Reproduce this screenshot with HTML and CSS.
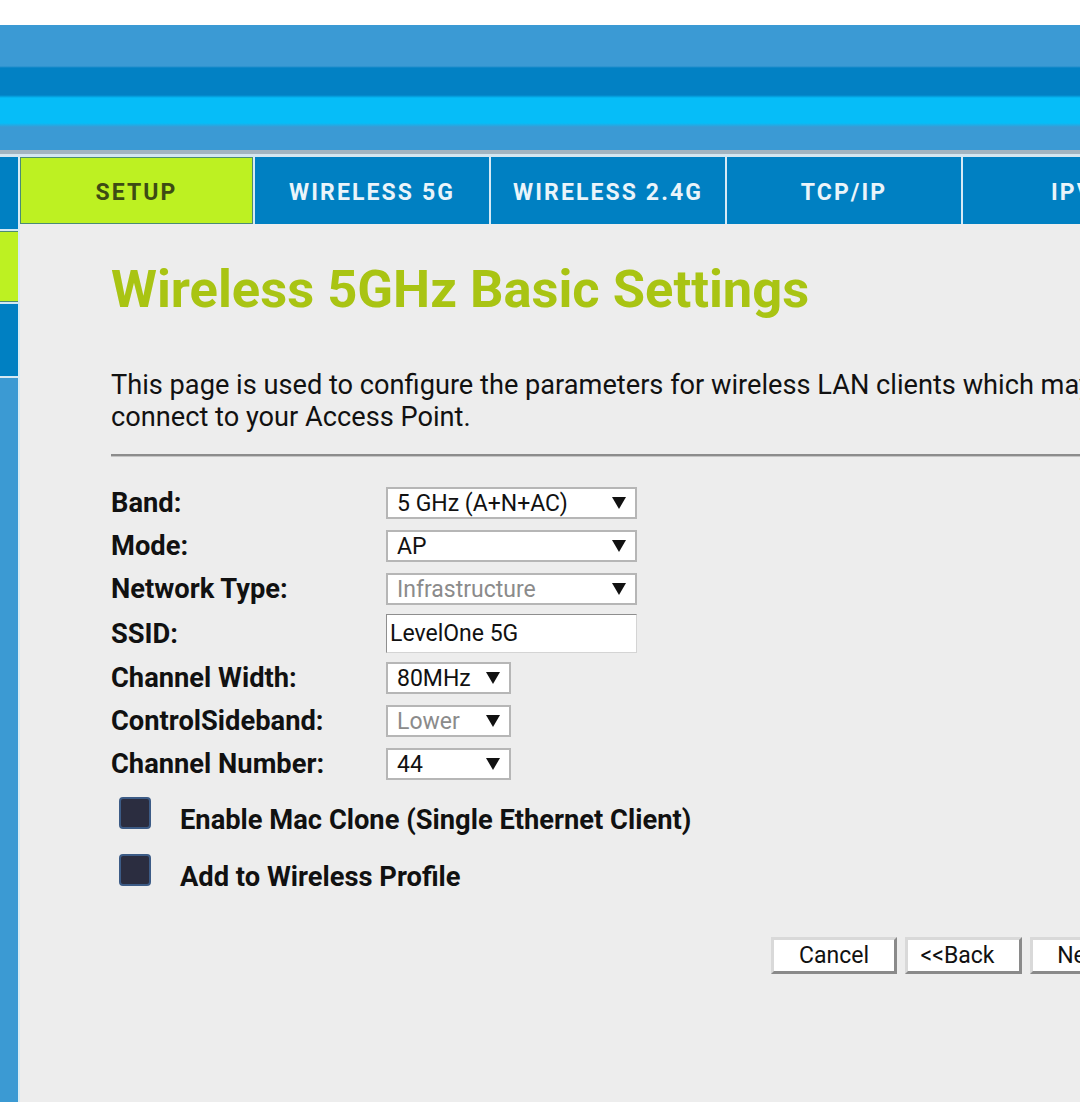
FILE: index.html
```html
<!DOCTYPE html>
<html lang="en">
<head>
<meta charset="utf-8">
<title>Wireless 5GHz Basic Settings</title>
<link rel="stylesheet" href="styles.css">
</head>
<body>
<div class="topbar"></div>
<header class="banner"></header>
<div class="layout">
  <aside class="side">
    <div class="side-item side-blue"></div>
    <div class="side-item side-lime"></div>
    <div class="side-item side-blue"></div>
  </aside>
  <div class="main">
    <nav class="tabs">
      <div class="tab tab-active">SETUP</div>
      <div class="tab">WIRELESS 5G</div>
      <div class="tab">WIRELESS 2.4G</div>
      <div class="tab">TCP/IP</div>
      <div class="tab">IPV6</div>
    </nav>
    <section class="content">
      <h1 class="title">Wireless 5GHz Basic Settings</h1>
      <p class="intro">This page is used to configure the parameters for wireless LAN clients which may connect to your Access Point.</p>
      <hr class="rule">
      <div class="form">
        <div class="label">Band:</div>
        <div class="select wide"><span>5 GHz (A+N+AC)</span><svg class="arrow" viewBox="0 0 14 12"><polygon points="0,0 14,0 7,12"/></svg></div>
        <div class="label">Mode:</div>
        <div class="select wide"><span>AP</span><svg class="arrow" viewBox="0 0 14 12"><polygon points="0,0 14,0 7,12"/></svg></div>
        <div class="label">Network Type:</div>
        <div class="select wide disabled"><span>Infrastructure</span><svg class="arrow" viewBox="0 0 14 12"><polygon points="0,0 14,0 7,12"/></svg></div>
        <div class="label">SSID:</div>
        <input class="text-input" type="text" value="LevelOne 5G">
        <div class="label">Channel Width:</div>
        <div class="select narrow"><span>80MHz</span><svg class="arrow" viewBox="0 0 14 12"><polygon points="0,0 14,0 7,12"/></svg></div>
        <div class="label">ControlSideband:</div>
        <div class="select narrow disabled"><span>Lower</span><svg class="arrow" viewBox="0 0 14 12"><polygon points="0,0 14,0 7,12"/></svg></div>
        <div class="label">Channel Number:</div>
        <div class="select narrow"><span>44</span><svg class="arrow" viewBox="0 0 14 12"><polygon points="0,0 14,0 7,12"/></svg></div>
      </div>
      <div class="checks">
        <div class="check-row"><span class="box"></span><span class="check-label">Enable Mac Clone (Single Ethernet Client)</span></div>
        <div class="check-row"><span class="box"></span><span class="check-label">Add to Wireless Profile</span></div>
      </div>
      <div class="buttons">
        <button class="btn btn-cancel">Cancel</button>
        <button class="btn btn-back">&lt;&lt;Back</button>
        <button class="btn btn-next">Next&gt;&gt;</button>
      </div>
    </section>
  </div>
</div>
</body>
</html>
```
FILE: styles.css
```css
html, body {
  margin: 0;
  padding: 0;
}
body {
  width: 1080px;
  height: 1102px;
  overflow: hidden;
  background: #ededed;
  font-family: Roboto, "Liberation Sans", sans-serif;
  color: #111;
}
.topbar {
  height: 25px;
  background: #ffffff;
}
.banner {
  height: 132px;
  background: linear-gradient(to bottom,
    #3b9ad4 0px, #3b9ad4 41px,
    #0281c4 43px, #0281c4 70px,
    #06bdf8 73px, #06bdf8 98px,
    #3b9ad4 102px, #3b9ad4 125px,
    #a2b4c0 125px, #a2b4c0 129px,
    #d4e6f0 129px, #d4e6f0 132px);
}
.layout {
  display: flex;
  height: 945px;
}
.side {
  flex: 0 0 18px;
  background: #3b9ad3;
  border-right: 2px solid #d8ebf4;
  display: flex;
  flex-direction: column;
}
.side-item {
  height: 72px;
  border-bottom: 2px solid #d5e9f3;
}
.side-blue {
  background: #0080c2;
}
.side-lime {
  background: #bdf122;
  height: 70px;
  border-top: 1px solid #4b8c74;
  box-shadow: inset 0 -1px 0 #4b8c74;
}
.main {
  flex: 1 1 auto;
  overflow: hidden;
  min-width: 0;
}
.tabs {
  display: flex;
  gap: 2px;
  height: 67px;
  background: #d6eaf5;
  width: 1300px;
}
.tab {
  box-sizing: border-box;
  flex: 0 0 234px;
  padding-top: 3px;
  background: #0080c2;
  color: #eaf4fa;
  font-weight: 700;
  font-size: 23px;
  letter-spacing: 2.1px;
  display: flex;
  align-items: center;
  justify-content: center;
}
.tab-active {
  flex-basis: 233px;
  background: #bdf122;
  color: #3d4b14;
  box-shadow: inset 0 0 0 1px #4b8c74;
}
.content {
  padding-left: 91px;
  width: 1010px;
}
.title {
  margin: 35px 0 0;
  font-size: 52.5px;
  font-weight: 700;
  color: #a9c413;
  line-height: 61px;
}
.intro {
  margin: 49px 0 0;
  font-size: 27.2px;
  line-height: 32px;
  color: #111;
}
.rule {
  margin: 21px 0 0;
  border: 0;
  border-top: 2px solid #8c8c8c;
  border-bottom: 1px solid #c4c4c4;
  height: 0;
  width: 1100px;
}
.form {
  margin-top: 30px;
  display: grid;
  grid-template-columns: 275px auto;
  row-gap: 11px;
  align-items: center;
  justify-items: start;
}
.label {
  font-size: 27.3px;
  font-weight: 700;
  line-height: 32px;
  color: #111;
}
.select {
  box-sizing: border-box;
  height: 32px;
  background: #fff;
  border: 2px solid #b6b6b6;
  display: flex;
  align-items: center;
  justify-content: space-between;
  padding: 0 9px 0 9px;
  font-size: 23px;
  color: #111;
}
.select.wide {
  width: 251px;
}
.select.narrow {
  width: 125px;
}
.select.disabled span {
  color: #8b8b8b;
}
.arrow {
  width: 14px;
  height: 12px;
  fill: #111;
}
.text-input {
  box-sizing: border-box;
  width: 251px;
  height: 39px;
  margin: -2px 0;
  border: 1px solid;
  border-color: #8e8e8e #d4d4d4 #d4d4d4 #8e8e8e;
  background: #fff;
  font-family: Roboto, "Liberation Sans", sans-serif;
  font-size: 23px;
  color: #111;
  padding: 0 0 0 3px;
  outline: none;
}
.checks {
  margin-top: 17px;
  display: flex;
  flex-direction: column;
  gap: 18px;
}
.check-row {
  display: flex;
  align-items: flex-start;
}
.box {
  box-sizing: border-box;
  width: 32px;
  height: 32px;
  margin-left: 8px;
  margin-right: 29px;
  background: #2b2d40;
  border: 2px solid #3c5b86;
  border-radius: 4px;
  flex: 0 0 auto;
}
.check-label {
  margin-top: 8px;
  font-size: 27.3px;
  font-weight: 700;
  line-height: 31px;
  color: #111;
}
.buttons {
  margin-top: 44px;
  margin-left: 660px;
  display: flex;
  gap: 8px;
}
.btn {
  box-sizing: border-box;
  height: 37px;
  padding: 0;
  background: #fff;
  border: 3px solid;
  border-color: #d9d9d9 #8a8a8a #8a8a8a #d9d9d9;
  font-family: Roboto, "Liberation Sans", sans-serif;
  font-size: 23px;
  color: #111;
  flex: 0 0 auto;
}
.btn-cancel { width: 126px; }
.btn-back { width: 117px; padding-right: 12px; }
.btn-next { width: 120px; padding-left: 6px; }
```
